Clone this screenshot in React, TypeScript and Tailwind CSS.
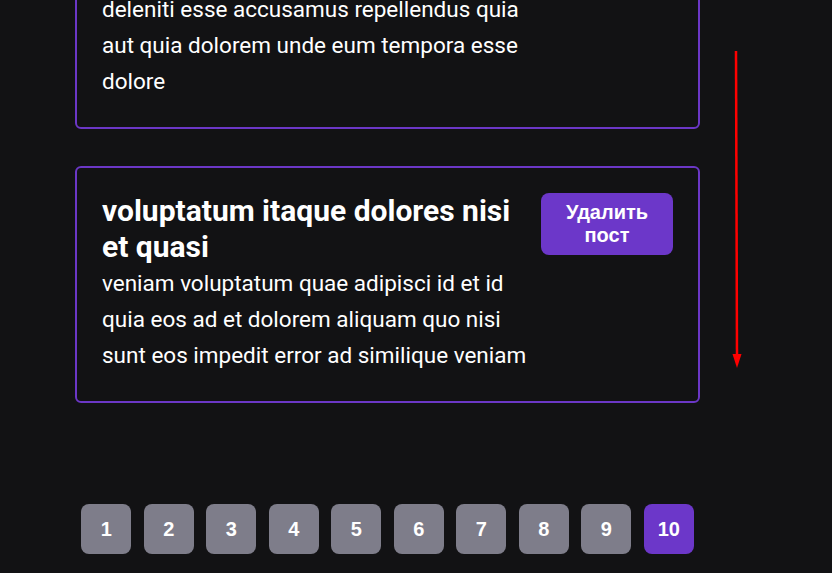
const posts = [
	{
		id: 9,
		title: 'id minus libero illum nam ad officiis',
		body: 'deleniti esse accusamus repellendus quia aut quia dolorem unde eum tempora esse dolore',
	},
	{
		id: 10,
		title: 'voluptatum itaque dolores nisi et quasi',
		body: 'veniam voluptatum quae adipisci id et id quia eos ad et dolorem aliquam quo nisi sunt eos impedit error ad similique veniam',
	},
]

const pages = [1, 2, 3, 4, 5, 6, 7, 8, 9, 10]

function PostCard({ title, body }: { title: string; body: string }) {
	return (
		<div className="flex items-start rounded-md border-2 border-[#6b37c6] px-[25px] pt-[25px] pb-[28px]">
			<div className="w-[432px]">
				<h3 className="text-[30px] font-bold leading-[36px] text-white">
					{title}
				</h3>
				<p className="text-[22.5px] leading-[36px] text-white">{body}</p>
			</div>
			<button className="ml-auto h-[62px] w-[132px] rounded-lg bg-[#6c37c9] font-['Liberation_Sans',Arial,sans-serif] text-[20px] font-bold leading-[23px] text-white">
				Удалить
				<br />
				пост
			</button>
		</div>
	)
}

export default function App() {
	return (
		<div className="relative h-[573px] overflow-hidden bg-[#121214] font-['Roboto',sans-serif]">
			<div className="ml-[75px] mt-[-108px] flex w-[625px] flex-col gap-[37px]">
				{posts.map((p) => (
					<PostCard key={p.id} title={p.title} body={p.body} />
				))}
			</div>

			<div className="ml-[75px] mt-[101px] flex w-[625px] justify-center gap-[12.5px] font-['Liberation_Sans',Arial,sans-serif]">
				{pages.map((n) => (
					<button
						key={n}
						className={
							n === 10
								? 'flex h-[50px] w-[50px] items-center justify-center rounded-lg bg-[#6c37c9] text-[20px] font-bold text-white'
								: 'flex h-[50px] w-[50px] items-center justify-center rounded-lg bg-[#7e7d8a] text-[20px] font-bold text-white'
						}
					>
						{n}
					</button>
				))}
			</div>

			<svg
				className="absolute left-[728px] top-[48px]"
				width="18"
				height="322"
				viewBox="0 0 18 322"
			>
				<line x1="8" y1="3" x2="9" y2="308" stroke="#ff0000" strokeWidth="2.5" />
				<polygon points="4.5,306 13.5,306 9,320" fill="#ff0000" />
			</svg>
		</div>
	)
}
